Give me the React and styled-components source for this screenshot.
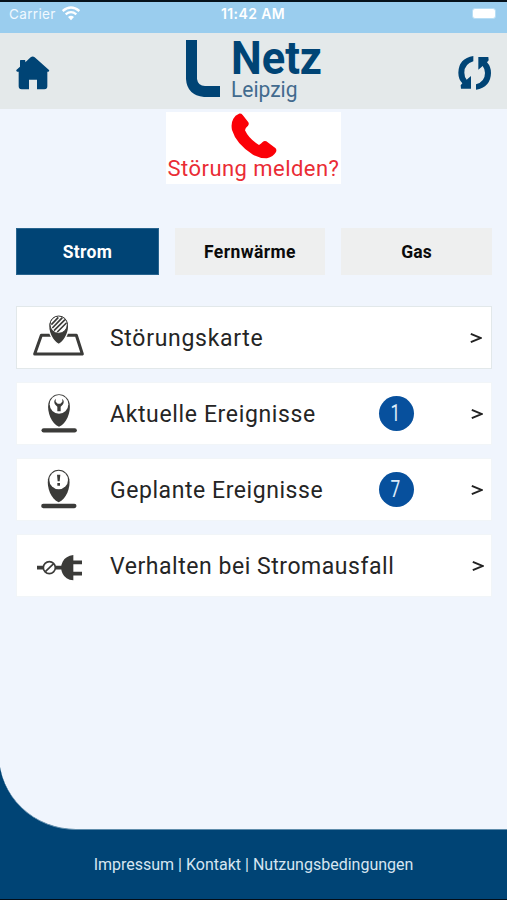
import React from "react";
import styled, { createGlobalStyle } from "styled-components";

const navy = "#004475";
const ink = "#3b3b39";

const GlobalStyle = createGlobalStyle`
  * { box-sizing: border-box; }
  body { margin: 0; background: #000; font-family: Roboto, "Liberation Sans", sans-serif; }
  svg { display: block; flex: none; }
`;

const Screen = styled.div`
  width: 507px;
  height: 900px;
  display: flex;
  flex-direction: column;
  background: #f0f5fd;
  border-top: 2px solid #06111a;
  border-bottom: 1px solid #020d18;
  overflow: hidden;
`;

const StatusBar = styled.div`
  height: 31px;
  flex: none;
  display: grid;
  grid-template-columns: 1fr auto 1fr;
  align-items: start;
  padding: 4px 10px 0 9px;
  background: #9acdee;
  color: #fff;
  font: 13.5px/16px Inter, sans-serif;
`;

const Carrier = styled.div`
  display: flex;
  gap: 6px;
  letter-spacing: 0.35px;
  color: #f1f9ff;
`;

const Clock = styled.div`
  font-weight: 600;
  font-size: 14px;
  letter-spacing: 0.4px;
`;

const Battery = styled.div`
  justify-self: end;
  width: 24px;
  height: 11px;
  margin-top: 2px;
  margin-right: 1px;
  border: 1px solid #b8def5;
  border-radius: 3px;
  background: #fff;
`;

const Header = styled.header`
  height: 76px;
  flex: none;
  display: flex;
  justify-content: space-between;
  align-items: flex-start;
  padding: 5px 15px 0 16px;
  background: #e4e9ea;
`;

const IconButton = styled.button`
  margin: 18px 0 0;
  padding: 0;
  border: 0;
  background: none;
`;

const Report = styled.button`
  width: 175px;
  height: 72px;
  flex: none;
  margin: 3px 0 0 166px;
  padding: 1px 0 0;
  display: flex;
  flex-direction: column;
  align-items: center;
  border: 0;
  background: #fff;
  color: #ea2c35;
  font: 22px/24px Roboto, sans-serif;
  letter-spacing: 0.45px;
  white-space: nowrap;

  span { margin-top: -2px; }
`;

const Tabs = styled.nav`
  display: grid;
  grid-template-columns: 143px 150px 151px;
  column-gap: 16px;
  margin: 44px 0 0 16px;
`;

const Tab = styled.button`
  height: 47px;
  padding: 1px 0 0;
  border: 1px solid ${(p) => (p.$active ? "#28648e" : "#eeefef")};
  background: ${(p) => (p.$active ? navy : "#eeefef")};
  color: ${(p) => (p.$active ? "#fff" : "#0b0b0b")};
  font: 700 17.5px/20px Roboto, sans-serif;
  letter-spacing: ${(p) => p.$spacing}px;
`;

const List = styled.main`
  display: flex;
  flex-direction: column;
  gap: 13px;
  margin: 31px 15px 0 16px;
`;

const Row = styled.div`
  height: 63px;
  display: grid;
  grid-template-columns: 93px 258px 1fr auto;
  grid-template-rows: 100%;
  align-items: center;
  padding: 1px ${(p) => p.$end}px 0 0;
  border: 1px solid ${(p) => (p.$outlined ? "#e2e8ea" : "#f1f5f8")};
  background: #fff;
  color: #252525;
`;

const Label = styled.span`
  padding-top: 2px;
  font-size: 23px;
  line-height: 28px;
  letter-spacing: ${(p) => p.$spacing}px;
  white-space: nowrap;
`;

const Badge = styled.span`
  width: 35px;
  height: 35px;
  margin-left: 11px;
  margin-bottom: 2px;
  border-radius: 50%;
  background: #07509d;
  color: #dcebfa;
  font: 400 23px/36px Roboto, sans-serif;
  text-align: center;
  padding-right: 3px;

  span { display: inline-block; transform: scaleX(0.75); }
`;

const Footer = styled.footer`
  height: 144px;
  margin-top: auto;
  flex: none;
  display: flex;
  flex-direction: column;
  background: ${navy};
`;

const Curve = styled.div`
  height: 75px;
  flex: none;
  margin-left: -1px;
  background: #f0f5fd;
  border-bottom-left-radius: 77px 75px;
  border-bottom: 1px solid #5f8cab;
`;

const Links = styled.div`
  flex: 1;
  display: flex;
  align-items: center;
  justify-content: center;
  color: #d6e6f1;
  font-size: 16px;
  line-height: 20px;
  letter-spacing: 0;
  white-space: pre;
`;

const Wifi = () => (
  <svg width="18" height="15" viewBox="186 16 54 45" fill="none" stroke="#fff" strokeWidth="7">
    <path d="M188 31Q213 10 238 31M197 41Q213 28 229 41" />
    <path d="M204 49Q213 41 222 49L213 59Z" fill="#fff" stroke="none" />
  </svg>
);

const HomeIcon = () => (
  <svg width="34" height="34" viewBox="49 169 102 102" fill={navy}>
    <path d="M50 211L61 201V183Q61 181 63 181H75Q77 181 77 183V188L93 173Q99 168 105 173L148 211Q150 215 146 216H143V260Q143 269 134 269H112V240H88V269H66Q57 269 57 260V216H53Q49 215 50 211Z" />
  </svg>
);

const RefreshIcon = () => (
  <svg width="34" height="34" viewBox="325 169 102 102" fill={navy}>
    <path d="M371 169V185Q344 193 344 219Q344 231 351 240L364 229V267H334L333 257L338 251Q326 238 326 219Q327 176 371 169Z" />
    <path d="M379 270V254Q406 246 406 220Q406 208 399 199L386 210V172H416L417 182L412 188Q424 201 424 220Q423 263 379 270Z" />
  </svg>
);

const LogoDrawing = styled.svg`
  overflow: visible;
`;

const Logo = () => (
  <LogoDrawing width="142" height="66" viewBox="183 38 142 66">
    <path d="M186 40H197V79Q198 86 205 86H220V97H204Q187 95 186 79Z" fill={navy} />
    <text x="231" y="74" textLength="91" lengthAdjust="spacingAndGlyphs" fill={navy} fontFamily="Roboto, sans-serif" fontWeight="700" fontSize="46">Netz</text>
    <text x="231" y="97" textLength="66.5" lengthAdjust="spacingAndGlyphs" fill="#426b8e" fontFamily="Roboto, sans-serif" fontSize="22">Leipzig</text>
  </LogoDrawing>
);

const PhoneIcon = () => (
  <svg width="48" height="46" viewBox="211 24 144 138" fill="#fb0007">
    <path d="M221 41Q226 30 238 26Q245 25 249 30L266 52Q269 57 265 62Q257 68 256 76Q268 102 298 120Q305 116 309 111Q314 106 320 109L347 129Q352 134 349 141Q341 155 322 160Q303 161 280 149Q230 118 217 75Q213 55 221 41Z" />
  </svg>
);

const MapIcon = () => (
  <svg width="93" height="61" viewBox="21 23 279 183" fill={ink}>
    <path d="M94 105H199L217 161H74Z" fill="none" stroke={ink} strokeWidth="9" strokeLinejoin="round" />
    <path d="M146 133C126 121 112 91 117 68C125 37 167 37 175 68C180 91 166 121 146 133Z" stroke="#fff" strokeWidth="4" />
    <circle cx="146" cy="73" r="26" fill="#fff" stroke={ink} strokeWidth="3" />
    <path d="M124 73L145 51M127 83L157 52M132 91L165 58M142 95L169 68" stroke={ink} strokeWidth="5" />
  </svg>
);

const PinBase = ({ children }) => (
  <>
    <path d="M101 389H194" stroke={ink} strokeWidth="13" strokeLinecap="round" />
    <path d="M147 378C124 369 111 333 115 309C123 271 171 271 179 309C183 333 170 369 147 378Z" />
    <circle cx="147" cy="311" r="28" fill="#fff" />
    {children}
  </>
);

const WrenchPinIcon = () => (
  <svg width="93" height="61" viewBox="21 250 279 183" fill={ink}>
    <PinBase>
      <path d="M137 294V303L143 309H151L157 303V294Q165 302 158 312L152 318V332H142V318L136 312Q129 302 137 294Z" />
    </PinBase>
  </svg>
);

const AlertPinIcon = () => (
  <svg width="93" height="61" viewBox="22 251 279 183" fill={ink}>
    <PinBase>
      <path d="M142 295H152L150 315H144ZM143 320H151V328H143Z" />
    </PinBase>
  </svg>
);

const PlugIcon = () => (
  <svg width="93" height="61" viewBox="21 256 279 183" fill={ink}>
    <path d="M81 351H101M136 351H158" stroke={ink} strokeWidth="11" />
    <circle cx="118" cy="351" r="18" fill="#fff" stroke={ink} strokeWidth="5" />
    <path d="M106 363L131 339" stroke={ink} strokeWidth="5" />
    <path d="M190 313V389Q166 386 158 369Q149 350 158 333Q167 316 190 313Z" />
    <path d="M188 335H216M188 369H216" stroke={ink} strokeWidth="11" />
  </svg>
);

const Chevron = () => (
  <svg width="12" height="12" viewBox="0 0 12 12" fill="none" stroke="#222" strokeWidth="1.9">
    <path d="M.8 1.8L10.5 6L.8 10.2" />
  </svg>
);

const rows = [
  { label: "Störungskarte", Icon: MapIcon, spacing: 0.7, end: 9, outlined: true },
  { label: "Aktuelle Ereignisse", Icon: WrenchPinIcon, count: 1, spacing: 0.64, end: 8 },
  { label: "Geplante Ereignisse", Icon: AlertPinIcon, count: 7, spacing: 0.56, end: 8 },
  { label: "Verhalten bei Stromausfall", Icon: PlugIcon, spacing: 0.54, end: 7 },
];

export default function App() {
  return (
    <Screen>
      <GlobalStyle />
      <StatusBar>
        <Carrier>Carrier<Wifi /></Carrier>
        <Clock>11:42 AM</Clock>
        <Battery />
      </StatusBar>
      <Header>
        <IconButton aria-label="Startseite"><HomeIcon /></IconButton>
        <Logo />
        <IconButton aria-label="Aktualisieren"><RefreshIcon /></IconButton>
      </Header>
      <Report>
        <PhoneIcon />
        <span>Störung melden?</span>
      </Report>
      <Tabs>
        <Tab $active $spacing={0.3}>Strom</Tab>
        <Tab $spacing={0.4}>Fernwärme</Tab>
        <Tab $spacing={0}>Gas</Tab>
      </Tabs>
      <List>
        {rows.map(({ label, Icon, count, spacing, end, outlined }) => (
          <Row key={label} $end={end} $outlined={outlined}>
            <Icon />
            <Label $spacing={spacing}>{label}</Label>
            {count ? <Badge><span>{count}</span></Badge> : <span />}
            <Chevron />
          </Row>
        ))}
      </List>
      <Footer>
        <Curve />
        <Links>
          <span>Impressum</span> | <span>Kontakt</span> | <span>Nutzungsbedingungen</span>
        </Links>
      </Footer>
    </Screen>
  );
}
